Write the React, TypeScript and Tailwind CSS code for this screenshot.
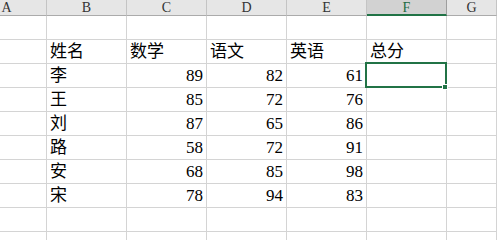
import React from 'react';

// ── Sheet data ───────────────────────────────────────────────
const COLS = ['A', 'B', 'C', 'D', 'E', 'F', 'G'];

const ROWS: (string | number | null)[][] = [
    [null, null, null, null, null, null, null],
    [null, '姓名', '数学', '语文', '英语', '总分', null],
    [null, '李', 89, 82, 61, null, null],
    [null, '王', 85, 72, 76, null, null],
    [null, '刘', 87, 65, 86, null, null],
    [null, '路', 58, 72, 91, null, null],
    [null, '安', 68, 85, 98, null, null],
    [null, '宋', 78, 94, 83, null, null],
    [null, null, null, null, null, null, null],
    [null, null, null, null, null, null, null],
];

const FONT = { fontFamily: '"Liberation Serif", "Noto Sans CJK SC", serif' };

function colWidth(i: number) {
    if (i === 0) return 'w-[80px] ml-[-33px]';
    if (i === 6) return 'flex-1';
    return 'w-[80px]';
}

// ── Column header ────────────────────────────────────────────
function HeaderRow() {
    return (
        <div className="flex h-4">
            {COLS.map((c, i) => {
                const active = c === 'F';
                return (
                    <div
                        key={c}
                        className={`flex shrink-0 justify-center text-[14px] leading-[15px] border-r ${colWidth(i)} ${
                            active
                                ? 'bg-[#d2d2d2] border-r-[#9e9e9e] border-b-2 border-b-[#217346] text-[#1e6b41]'
                                : 'bg-[#e6e6e6] border-r-[#c4c4c4] border-b border-b-[#ababab] text-[#333]'
                        }`}
                    >
                        {c}
                    </div>
                );
            })}
        </div>
    );
}

// ── Cell ─────────────────────────────────────────────────────
function Cell({ value, i, selected }: { value: string | number | null; i: number; selected?: boolean }) {
    const isNum = typeof value === 'number';
    return (
        <div
            className={`relative flex shrink-0 items-end h-6 border-r border-b border-[#d4d4d4] pb-[1px] text-[17px] leading-[20px] text-black ${colWidth(i)} ${
                isNum ? 'justify-end pr-[3px]' : 'pl-[3px]'
            }`}
        >
            {value}
            {selected && (
                <>
                    <div className="absolute z-10 -left-[2px] -top-[2px] -right-[1px] -bottom-[1px] border-2 border-[#217346]" />
                    <div className="absolute z-20 -right-[2px] -bottom-[3px] h-[6px] w-[6px] bg-[#217346] border border-white" />
                </>
            )}
        </div>
    );
}

export default function App() {
    return (
        <div className="h-[240px] w-[497px] overflow-hidden bg-white" style={FONT}>
            <HeaderRow />
            {ROWS.map((row, r) => (
                <div key={r} className="flex">
                    {row.map((v, i) => (
                        <Cell key={i} value={v} i={i} selected={r === 2 && i === 5} />
                    ))}
                </div>
            ))}
        </div>
    );
}
